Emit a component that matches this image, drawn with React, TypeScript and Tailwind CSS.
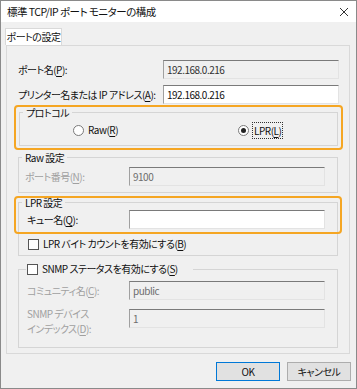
import React from 'react';

const font = "[font-family:'Noto_Sans_CJK_JP','Noto_Sans',sans-serif] [font-feature-settings:'palt']";

function Key({ k }: { k: string }) {
    return (
        <>
            (<span className="underline underline-offset-2">{k}</span>)
        </>
    );
}

function TextBox({ value, disabled }: { value?: string; disabled?: boolean }) {
    return (
        <div
            className={`h-[19px] w-[196px] flex items-center pl-[3px] border border-t-[#7a7a7a] border-l-[#a0a0a0] border-r-[#e3e3e3] border-b-[#e3e3e3] ${
                disabled ? 'bg-[#f0f0f0] text-[#6d6d6d]' : 'bg-white text-black'
            }`}
        >
            {value}
        </div>
    );
}

function Radio({ checked }: { checked?: boolean }) {
    return (
        <span className="w-[11px] h-[11px] rounded-full border border-[#7a7a7a] bg-white flex items-center justify-center shrink-0">
            {checked && <span className="w-[5px] h-[5px] rounded-full bg-[#222]" />}
        </span>
    );
}

function CheckBox() {
    return <span className="w-[11px] h-[11px] border border-[#555] bg-white shrink-0" />;
}

export default function App() {
    return (
        <div className={`w-[357px] h-[389px] border border-[#8a8a8a] bg-[#f0f0f0] flex flex-col text-[10px] leading-[14px] tracking-[-0.5px] whitespace-nowrap text-[#111] ${font}`}>
            {/* title bar */}
            <div className="h-[21px] bg-white flex items-center justify-between pl-[6px] pr-[7px] shrink-0">
                <span className="text-[10.5px]">標準 TCP/IP ポート モニターの構成</span>
                <svg width="10" height="10" viewBox="0 0 10 10">
                    <path d="M1 1L9 9M9 1L1 9" stroke="#333" strokeWidth="1" />
                </svg>
            </div>

            {/* tab */}
            <div className="mt-[6px] ml-[4px] flex">
                <div className="h-[17px] w-[57px] bg-white border border-b-0 border-[#d9d9d9] flex items-center justify-center">
                    ポートの設定
                </div>
            </div>

            {/* panel */}
            <div className="ml-[5px] w-[344px] h-[309px] border border-[#d9d9d9] bg-[#f0f0f0] flex flex-col pt-[14px]">
                <div className="flex items-center h-[19px] pl-[11px]">
                    <span className="w-[145px]">ポート名<Key k="P" />:</span>
                    <div className="h-[19px] w-[176px] flex items-center pl-[3px] bg-[#f0f0f0] text-[#333] border border-t-[#7a7a7a] border-l-[#a0a0a0] border-r-[#e3e3e3] border-b-[#e3e3e3]">
                        192.168.0.216
                    </div>
                </div>
                <div className="flex items-center h-[19px] pl-[11px] mt-[6px]">
                    <span className="w-[145px]">プリンター名または IP アドレス<Key k="A" />:</span>
                    <div className="h-[19px] w-[176px] flex items-center pl-[3px] bg-white border border-t-[#7a7a7a] border-l-[#a0a0a0] border-r-[#e3e3e3] border-b-[#e3e3e3]">
                        192.168.0.216
                    </div>
                </div>

                {/* protocol */}
                <div className="ml-[7px] mt-[1px] w-[329px] h-[45px] border-2 border-[#f5a623] rounded-[4px] pl-[3px] pr-[3px]">
                    <fieldset className="border border-[#d5d5d5] h-[40px] w-[319px] p-0 m-0 -mt-[1px]">
                        <legend className="ml-[3px] px-[3px] leading-[13px]">プロトコル</legend>
                        <div className="flex items-center h-[22px]">
                            <div className="w-[218px] pl-[53px] flex items-center gap-[4px]">
                                <Radio />
                                <span>Raw<Key k="R" /></span>
                            </div>
                            <div className="flex items-center gap-[3px]">
                                <Radio checked />
                                <span className="border border-dotted border-[#333] px-[1px] leading-[15px]">LPR<Key k="L" /></span>
                            </div>
                        </div>
                    </fieldset>
                </div>

                {/* raw settings */}
                <fieldset className="ml-[11px] mt-[1px] w-[320px] border border-[#d5d5d5] p-0 pb-[6px]">
                    <legend className="ml-[3px] px-[3px] leading-[13px]">Raw 設定</legend>
                    <div className="flex items-center mt-[3px] pl-[6px]">
                        <span className="w-[104px] text-[#a0a0a0]">ポート番号<Key k="N" />:</span>
                        <TextBox value="9100" disabled />
                    </div>
                </fieldset>

                {/* lpr settings */}
                <div className="relative ml-[11px] mt-[3px] w-[320px]">
                    <fieldset className="border border-[#d5d5d5] p-0 pb-[3px]">
                        <legend className="ml-[3px] px-[3px] leading-[13px]">LPR 設定</legend>
                        <div className="flex items-center mt-[1px] pl-[8px]">
                            <span className="w-[102px]">キュー名<Key k="Q" />:</span>
                            <TextBox />
                        </div>
                        <div className="flex items-center gap-[4px] h-[16px] mt-[7px] pl-[9px]">
                            <CheckBox />
                            <span>LPR バイト カウントを有効にする<Key k="B" /></span>
                        </div>
                    </fieldset>
                    <div className="absolute -left-[4px] -right-[4px] top-0 h-[38px] border-2 border-[#f5a623] rounded-[4px] pointer-events-none" />
                </div>

                {/* snmp */}
                <fieldset className="ml-[11px] mt-[6px] w-[320px] border border-[#d5d5d5] p-0 pb-[11px]">
                    <legend className="ml-[7px] pl-[1px] pr-[15px] leading-[14px]">
                        <span className="flex items-center gap-[4px]">
                            <CheckBox />
                            <span>SNMP ステータスを有効にする<Key k="S" /></span>
                        </span>
                    </legend>
                    <div className="flex items-center mt-[5px] pl-[8px]">
                        <span className="w-[102px] text-[#a0a0a0]">コミュニティ名<Key k="C" />:</span>
                        <TextBox value="public" disabled />
                    </div>
                    <div className="flex items-start mt-[9px] pl-[8px]">
                        <span className="w-[102px] text-[#a0a0a0] leading-[15px] -mt-[3px]">
                            SNMP デバイス
                            <br />
                            インデックス<Key k="D" />:
                        </span>
                        <TextBox value="1" disabled />
                    </div>
                </fieldset>
            </div>

            {/* buttons */}
            <div className="flex justify-end gap-[7px] pr-[5px] mt-[8px]">
                <button className="w-[64px] h-[19px] bg-[#e1e1e1] border border-[#0078d7] flex items-center justify-center">
                    OK
                </button>
                <button className="w-[64px] h-[19px] bg-[#e1e1e1] border border-[#adadad] flex items-center justify-center">
                    キャンセル
                </button>
            </div>
        </div>
    );
}
